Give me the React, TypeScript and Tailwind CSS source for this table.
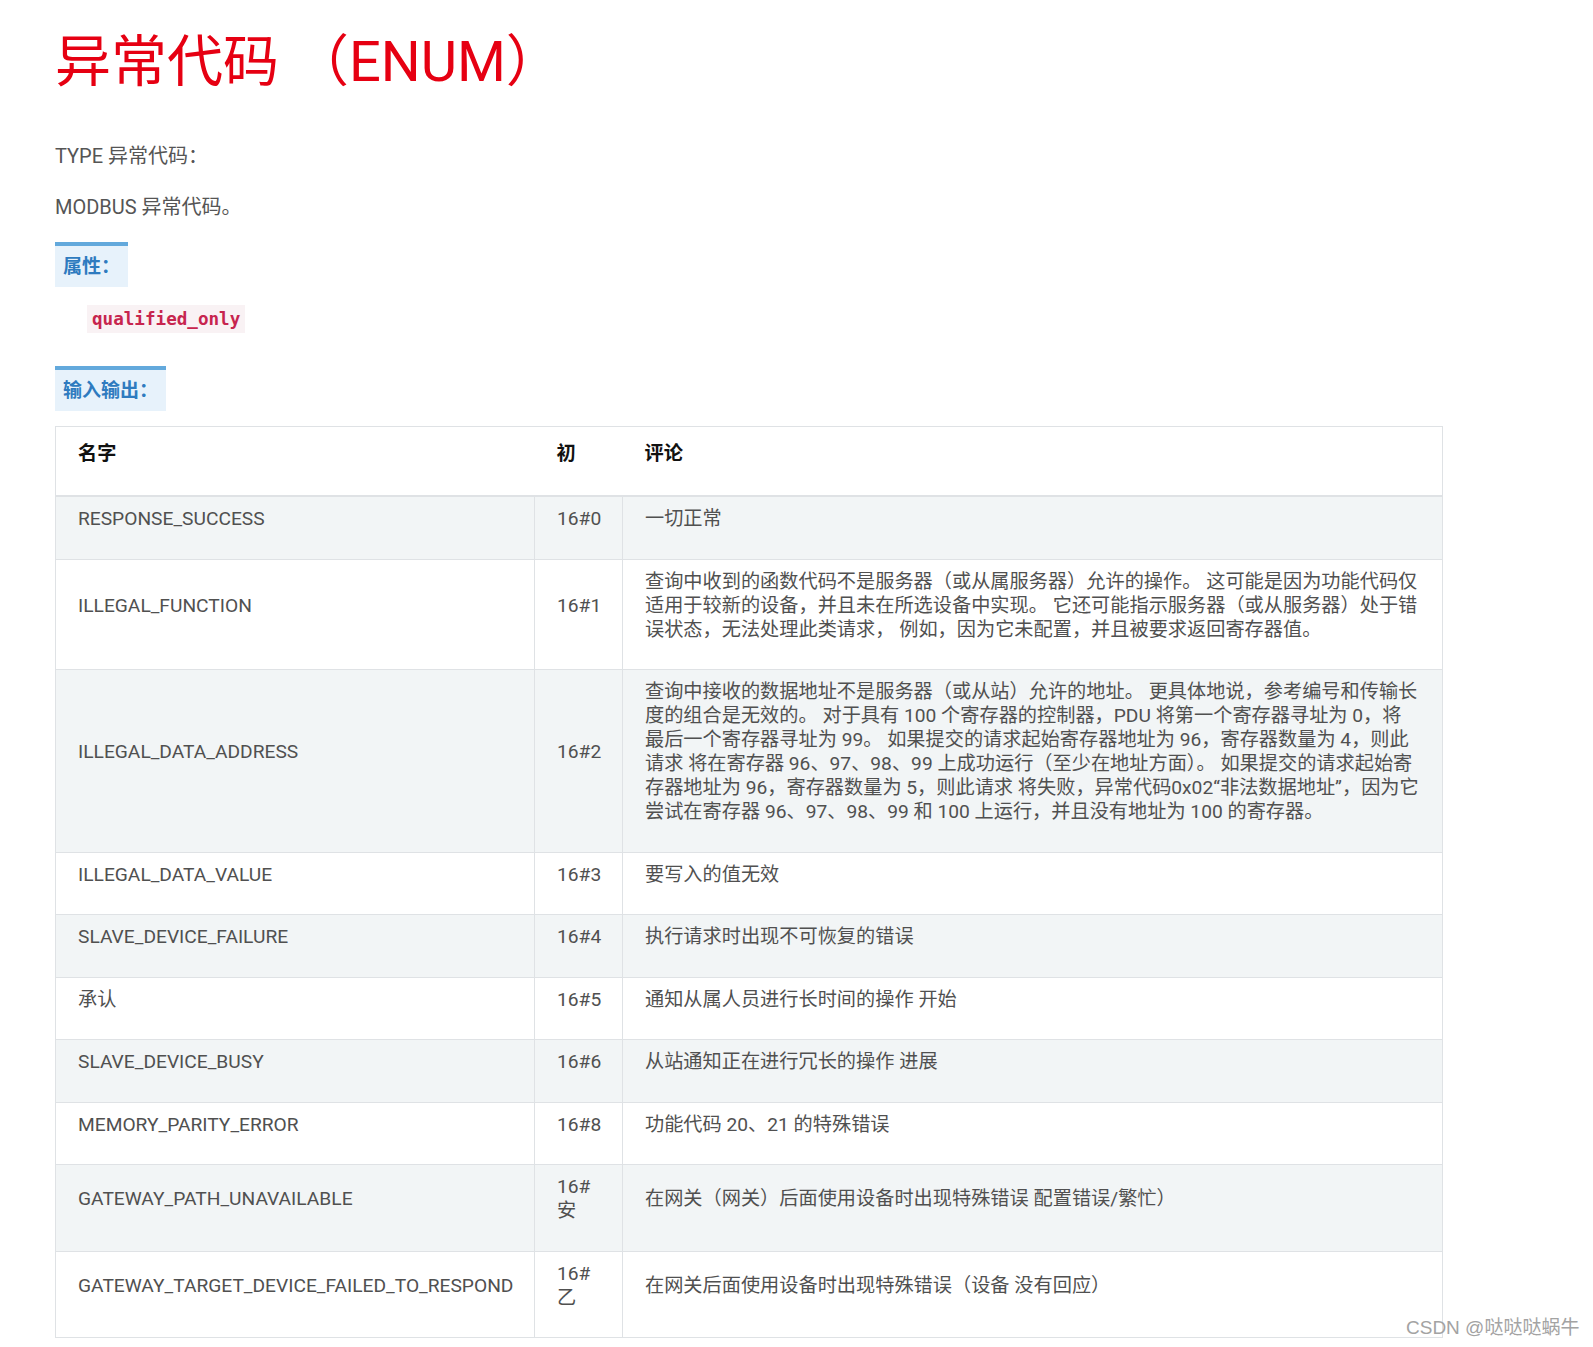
import React from 'react'

const font = { fontFamily: 'Roboto, "Noto Sans CJK SC", sans-serif' }

type Row = { name: string; init: string; comment: string }

const rows: Row[] = [
  { name: 'RESPONSE_SUCCESS', init: '16#0', comment: '一切正常' },
  {
    name: 'ILLEGAL_FUNCTION',
    init: '16#1',
    comment:
      '查询中收到的函数代码不是服务器（或从属服务器）允许的操作。 这可能是因为功能代码仅适用于较新的设备，并且未在所选设备中实现。 它还可能指示服务器（或从服务器）处于错误状态，无法处理此类请求， 例如，因为它未配置，并且被要求返回寄存器值。',
  },
  {
    name: 'ILLEGAL_DATA_ADDRESS',
    init: '16#2',
    comment:
      '查询中接收的数据地址不是服务器（或从站）允许的地址。 更具体地说，参考编号和传输长度的组合是无效的。 对于具有 100 个寄存器的控制器，PDU 将第一个寄存器寻址为 0，将最后一个寄存器寻址为 99。 如果提交的请求起始寄存器地址为 96，寄存器数量为 4，则此请求 将在寄存器 96、97、98、99 上成功运行（至少在地址方面）。 如果提交的请求起始寄存器地址为 96，寄存器数量为 5，则此请求 将失败，异常代码0x02“非法数据地址”，因为它尝试在寄存器 96、97、98、99 和 100 上运行，并且没有地址为 100 的寄存器。',
  },
  { name: 'ILLEGAL_DATA_VALUE', init: '16#3', comment: '要写入的值无效' },
  { name: 'SLAVE_DEVICE_FAILURE', init: '16#4', comment: '执行请求时出现不可恢复的错误' },
  { name: '承认', init: '16#5', comment: '通知从属人员进行长时间的操作 开始' },
  { name: 'SLAVE_DEVICE_BUSY', init: '16#6', comment: '从站通知正在进行冗长的操作 进展' },
  { name: 'MEMORY_PARITY_ERROR', init: '16#8', comment: '功能代码 20、21 的特殊错误' },
  {
    name: 'GATEWAY_PATH_UNAVAILABLE',
    init: '16#安',
    comment: '在网关（网关）后面使用设备时出现特殊错误 配置错误/繁忙）',
  },
  {
    name: 'GATEWAY_TARGET_DEVICE_FAILED_TO_RESPOND',
    init: '16#乙',
    comment: '在网关后面使用设备时出现特殊错误（设备 没有回应）',
  },
]

function SectionTag({ children }: { children: React.ReactNode }) {
  return (
    <div className="inline-block border-t-4 border-[#63a9dc] bg-[#e7f2fb] px-[8px] text-[19px] leading-[41px] font-bold text-[#2e7bbf]">
      {children}
    </div>
  )
}

export default function App() {
  return (
    <div className="relative min-h-[1347px] bg-white pl-[55px]" style={font}>
      <h1 className="pt-[34px] text-[56px] leading-none font-normal text-[#e60012]">异常代码 （ENUM）</h1>

      <p className="mt-[51px] text-[20px] leading-[30px] text-[#555]">TYPE 异常代码：</p>
      <p className="mt-[21px] text-[20px] leading-[30px] text-[#555]">MODBUS 异常代码。</p>

      <div className="mt-[20px]">
        <SectionTag>属性：</SectionTag>
      </div>
      <div className="mt-[18px] ml-[32px]">
        <code
          className="inline-block bg-[#f9f2f4] px-[5px] text-[17.6px] leading-[28px] font-bold text-[#c7254e]"
          style={{ fontFamily: '"DejaVu Sans Mono", monospace' }}
        >
          qualified_only
        </code>
      </div>

      <div className="mt-[33px]">
        <SectionTag>输入输出：</SectionTag>
      </div>

      <table className="mt-[15px] w-[1387px] table-fixed border-collapse border border-[#dfe2e5] text-[19.2px] leading-[24px] text-[#505050]">
        <colgroup>
          <col className="w-[479px]" />
          <col className="w-[88px]" />
          <col className="w-[820px]" />
        </colgroup>
        <thead>
          <tr className="border-b-2 border-[#dfe2e5]">
            <th className="px-[22px] pt-[15px] pb-[29px] text-left align-top font-bold text-[#111]">名字</th>
            <th className="px-[22px] pt-[15px] pb-[29px] text-left align-top font-bold text-[#111]">初</th>
            <th className="px-[22px] pt-[15px] pb-[29px] text-left align-top font-bold text-[#111]">评论</th>
          </tr>
        </thead>
        <tbody>
          {rows.map((r, i) => (
            <tr key={r.name} className={i % 2 === 0 ? 'bg-[#f2f5f6]' : 'bg-white'}>
              <td className="border border-[#dfe2e5] px-[22px] pt-[10px] pb-[27.5px] align-middle">{r.name}</td>
              <td className="border border-[#dfe2e5] px-[22px] pt-[10px] pb-[27.5px] align-middle">{r.init}</td>
              <td className="border border-[#dfe2e5] px-[22px] pt-[10px] pb-[27.5px] align-middle">{r.comment}</td>
            </tr>
          ))}
        </tbody>
      </table>

      <div
        className="absolute top-[1316px] left-[1406px] text-[19px] leading-[24px] whitespace-nowrap text-[#a3a3a3]"
        style={{ fontFamily: '"Liberation Sans", "Noto Sans CJK SC", sans-serif' }}
      >
        CSDN @哒哒哒蜗牛
      </div>
    </div>
  )
}
